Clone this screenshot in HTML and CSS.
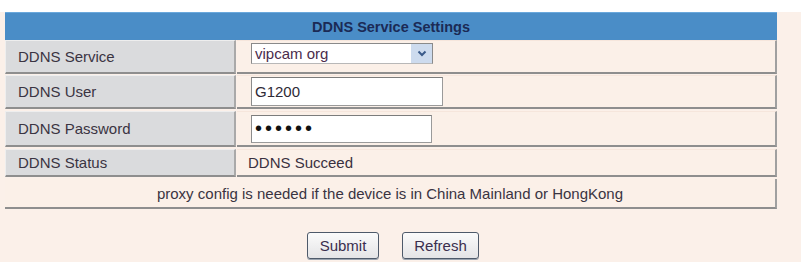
FILE: index.html
```html
<!DOCTYPE html>
<html>
<head>
<meta charset="utf-8">
<link rel="stylesheet" href="styles.css">
</head>
<body>
<div class="page">
  <div class="panel">
    <div class="settings">
      <div class="title">DDNS Service Settings</div>
      <div class="row r1">
        <div class="label">DDNS Service</div>
        <div class="value">
          <div class="select">
            <span class="select-text">vipcam org</span>
            <span class="select-btn">
              <svg width="10" height="7" viewBox="0 0 10 7"><path d="M1.5 1.5 L5 5 L8.5 1.5" fill="none" stroke="#3a5a8a" stroke-width="2"/></svg>
            </span>
          </div>
        </div>
      </div>
      <div class="row r2">
        <div class="label">DDNS User</div>
        <div class="value"><input class="field user" type="text" value="G1200"></div>
      </div>
      <div class="row r3">
        <div class="label">DDNS Password</div>
        <div class="value"><input class="field pass" type="password" value="abcdef"></div>
      </div>
      <div class="row r4">
        <div class="label">DDNS Status</div>
        <div class="value status">DDNS Succeed</div>
      </div>
      <div class="row r5">
        <div class="note">proxy config is needed if the device is in China Mainland or HongKong</div>
      </div>
    </div>
    <div class="actions">
      <button class="btn submit">Submit</button>
      <button class="btn refresh">Refresh</button>
    </div>
  </div>
</div>
</body>
</html>
```

FILE: styles.css
```css
html, body {
  margin: 0;
  padding: 0;
  background: #ffffff;
}
body {
  font-family: "Liberation Sans", Arial, sans-serif;
  font-size: 15px;
  color: #3a3442;
}
.page {
  padding-top: 12px;
  height: 250px;
  width: 806px;
  overflow: hidden;
}
.panel {
  width: 796px;
  height: 250px;
  padding-left: 5px;
  background: #fbf0e9;
}
.settings {
  width: 772px;
}
.title {
  height: 28px;
  line-height: 28px;
  background: #4a8dc7;
  border-top: 1px solid #6aa8dc;
  box-sizing: border-box;
  text-align: center;
  font-weight: bold;
  font-size: 14.5px;
  color: #1b2a55;
}
.row {
  display: flex;
  box-sizing: border-box;
}
.r1 { height: 34px; margin-bottom: 1px; }
.r2 { height: 34px; margin-bottom: 2px; }
.r3 { height: 36px; margin-bottom: 2px; }
.r4 { height: 28px; margin-bottom: 2px; }
.r5 { height: 30px; }
.label {
  width: 231px;
  box-sizing: border-box;
  background: #dadbdd;
  border-top: 1px solid #eeeeee;
  border-left: 1px solid #eeeeee;
  border-right: 2px solid #a9a9a9;
  border-bottom: 2px solid #8e8e8e;
  padding-left: 12px;
  display: flex;
  align-items: center;
  color: #3a3442;
}
.value {
  flex: 1;
  box-sizing: border-box;
  margin-left: 1px;
  background: #fbf0e8;
  border-top: 1px solid #f6e6dc;
  border-right: 2px solid #a0a0a0;
  border-bottom: 2px solid #8e8e8e;
  padding-left: 14px;
  display: flex;
  align-items: center;
}
.r1 .value { align-items: flex-start; padding-top: 2px; }
.status {
  padding-left: 11px;
  color: #3a3040;
}
.note {
  flex: 1;
  box-sizing: border-box;
  background: #fbf0e8;
  border-right: 2px solid #a0a0a0;
  border-bottom: 2px solid #8e8e8e;
  display: flex;
  align-items: center;
  justify-content: center;
  font-size: 15px;
  color: #3a3442;
}
.select {
  width: 182px;
  height: 21px;
  box-sizing: border-box;
  border: 1px solid #8a8a8a;
  border-bottom-color: #b8b8b8;
  background: #ffffff;
  display: flex;
  align-items: center;
}
.select-text {
  flex: 1;
  padding-left: 3px;
  color: #4a2c4c;
}
.select-btn {
  width: 21px;
  height: 19px;
  background: #cddbee;
  display: flex;
  align-items: center;
  justify-content: center;
}
.field {
  box-sizing: border-box;
  background: #ffffff;
  border: 1px solid #9a9a9a;
  border-top-color: #7c7c7c;
  border-left-color: #8c8c8c;
  font-family: "Liberation Sans", Arial, sans-serif;
  font-size: 15px;
  color: #2e2a36;
  padding: 0 0 0 3px;
  margin: 0;
  outline: none;
}
.user {
  width: 192px;
  height: 29px;
}
.pass {
  width: 181px;
  height: 28px;
  letter-spacing: 3px;
  font-size: 20px;
  color: #111111;
}
.actions {
  width: 772px;
  display: flex;
  justify-content: center;
  gap: 23px;
  padding-top: 23px;
  padding-left: 4px;
  box-sizing: border-box;
}
.btn {
  height: 27px;
  box-sizing: border-box;
  border: 1px solid #4e5a6a;
  border-radius: 3px;
  background: linear-gradient(#fbfbfb, #e4e4e6);
  font-family: "Liberation Sans", Arial, sans-serif;
  font-size: 15px;
  color: #3a2e4e;
  padding: 0;
  box-shadow: 0 1px 0 #9aa4b0;
}
.submit { width: 72px; }
.refresh { width: 77px; }
```
